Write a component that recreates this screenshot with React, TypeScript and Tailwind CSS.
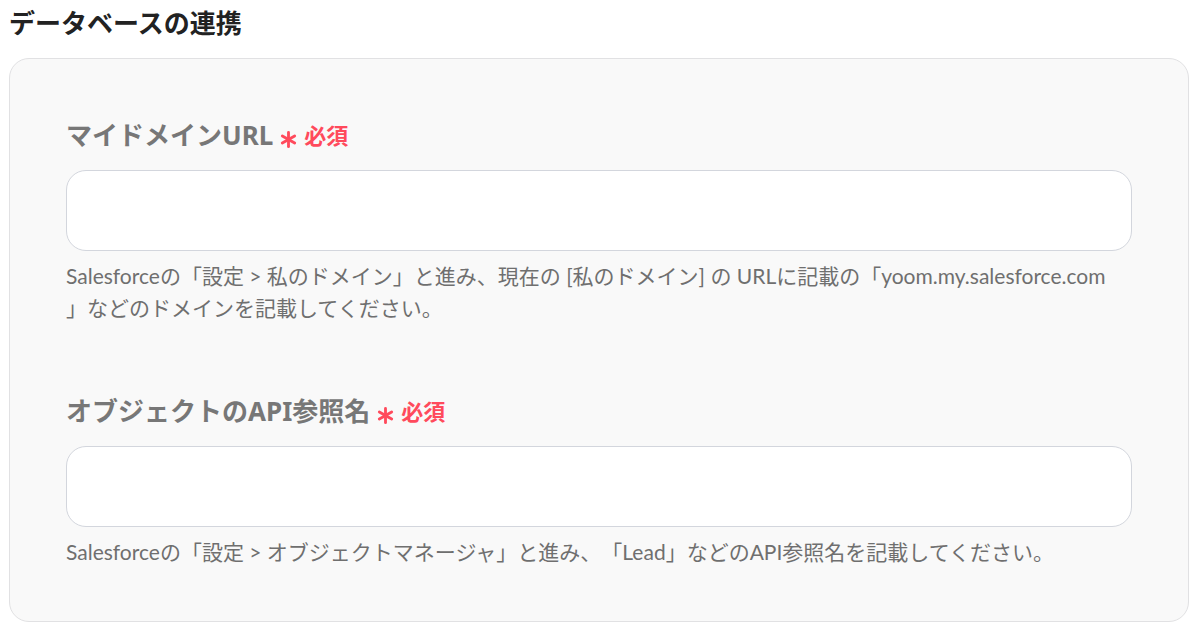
import type { ReactNode } from 'react';

const font = { fontFamily: '"Noto Sans", "Noto Sans CJK JP", sans-serif' };
const helpFont = { fontFamily: 'Lato, "Noto Sans CJK JP", sans-serif' };

function RequiredMark() {
  return (
    <span className="ml-[6px] inline-flex items-center gap-[6px] text-[#ff4a5c]">
      <svg viewBox="0 0 20 20" className="mt-[8px] h-[19px] w-[19px]" fill="none" stroke="currentColor" strokeWidth="3" strokeLinecap="round">
        <path d="M10 2.5v15" />
        <path d="M3.5 6.25l13 7.5" />
        <path d="M3.5 13.75l13 -7.5" />
      </svg>
      <span className="text-[22px] font-bold">必須</span>
    </span>
  );
}

function Field({ label, help, className }: { label: string; help: ReactNode; className?: string }) {
  return (
    <div className={className}>
      <div className="flex items-center h-[36px] text-[26px] font-bold text-[#777777] leading-[36px]">
        <span>{label}</span>
        <RequiredMark />
      </div>
      <input
        type="text"
        className="mt-[17px] block w-full h-[81px] rounded-[20px] border border-[#d3d6dd] bg-white px-5 outline-none"
      />
      <p
        className="mt-[9px] whitespace-nowrap text-[21px] leading-[32px] text-[#6f6f6f] [text-spacing-trim:space-all]"
        style={helpFont}
      >
        {help}
      </p>
    </div>
  );
}

export default function App() {
  return (
    <div className="min-h-screen bg-white pl-[9px] pr-[13px] pt-[5px]" style={font}>
      <h2 className="text-[26px] font-bold leading-[36px] text-[#222222]">データベースの連携</h2>
      <div className="mt-[17px] rounded-[20px] border border-[#e1e1e3] bg-[#f9f9f9] px-[56px] pt-[58px] pb-[53px]">
        <Field
          label="マイドメインURL"
          help={
            <>
              Salesforceの「設定 &gt; 私のドメイン」と進み、現在の [私のドメイン] の URLに記載の「yoom.my.salesforce.com
              <br />」などのドメインを記載してください。
            </>
          }
        />
        <Field
          className="mt-[69px]"
          label="オブジェクトのAPI参照名"
          help="Salesforceの「設定 > オブジェクトマネージャ」と進み、「Lead」などのAPI参照名を記載してください。"
        />
      </div>
    </div>
  );
}
